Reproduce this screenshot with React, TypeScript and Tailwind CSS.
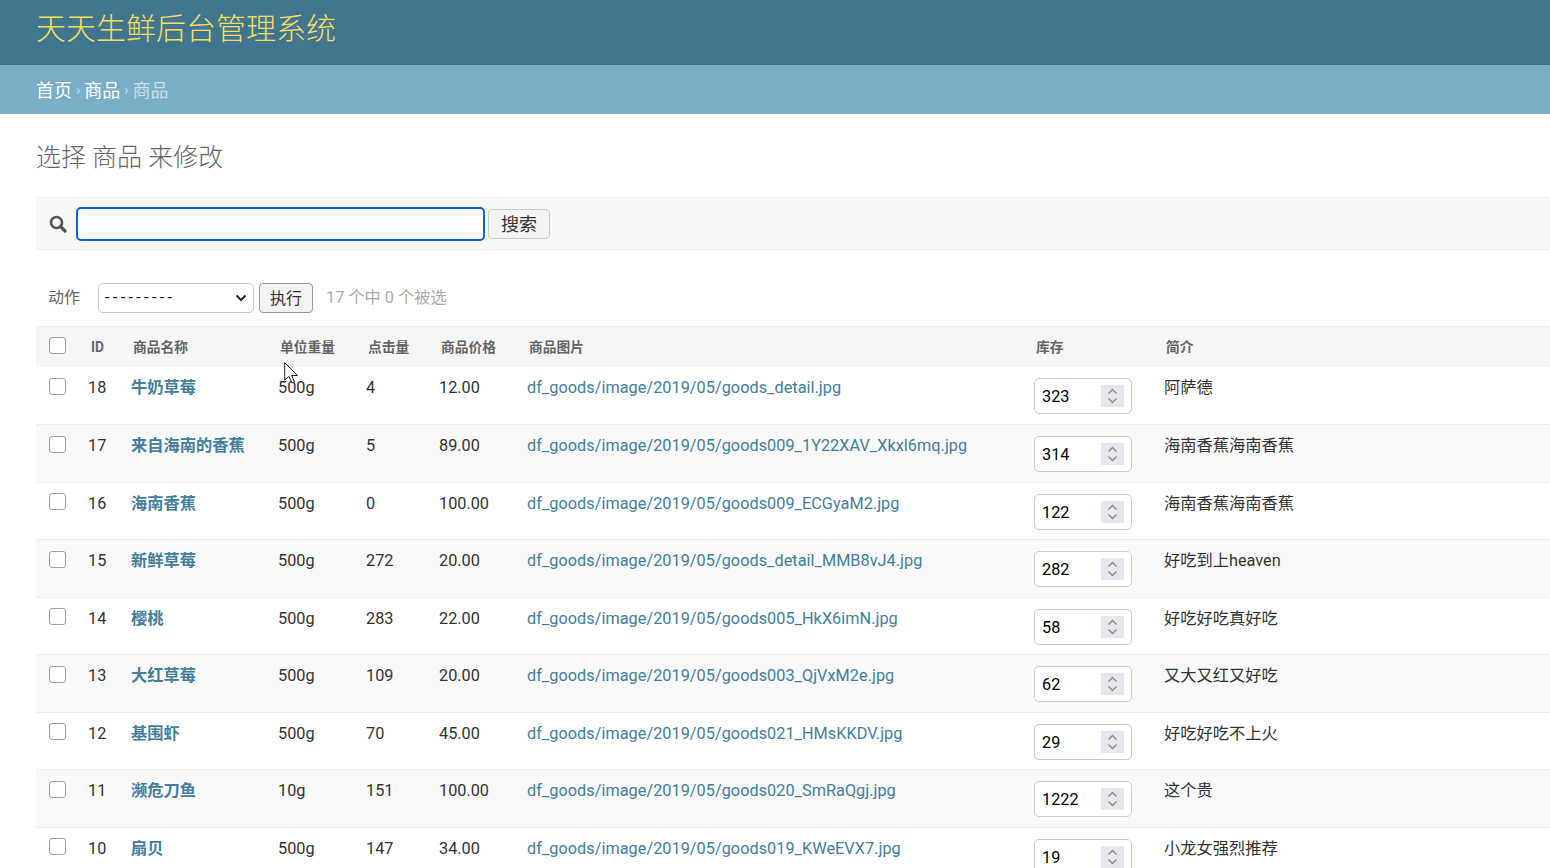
import React from 'react';

const goods = [
  { id: 18, name: '牛奶草莓', weight: '500g', clicks: 4, price: '12.00', image: 'df_goods/image/2019/05/goods_detail.jpg', stock: 323, desc: '阿萨德' },
  { id: 17, name: '来自海南的香蕉', weight: '500g', clicks: 5, price: '89.00', image: 'df_goods/image/2019/05/goods009_1Y22XAV_Xkxl6mq.jpg', stock: 314, desc: '海南香蕉海南香蕉' },
  { id: 16, name: '海南香蕉', weight: '500g', clicks: 0, price: '100.00', image: 'df_goods/image/2019/05/goods009_ECGyaM2.jpg', stock: 122, desc: '海南香蕉海南香蕉' },
  { id: 15, name: '新鲜草莓', weight: '500g', clicks: 272, price: '20.00', image: 'df_goods/image/2019/05/goods_detail_MMB8vJ4.jpg', stock: 282, desc: '好吃到上heaven' },
  { id: 14, name: '樱桃', weight: '500g', clicks: 283, price: '22.00', image: 'df_goods/image/2019/05/goods005_HkX6imN.jpg', stock: 58, desc: '好吃好吃真好吃' },
  { id: 13, name: '大红草莓', weight: '500g', clicks: 109, price: '20.00', image: 'df_goods/image/2019/05/goods003_QjVxM2e.jpg', stock: 62, desc: '又大又红又好吃' },
  { id: 12, name: '基围虾', weight: '500g', clicks: 70, price: '45.00', image: 'df_goods/image/2019/05/goods021_HMsKKDV.jpg', stock: 29, desc: '好吃好吃不上火' },
  { id: 11, name: '濒危刀鱼', weight: '10g', clicks: 151, price: '100.00', image: 'df_goods/image/2019/05/goods020_SmRaQgj.jpg', stock: 1222, desc: '这个贵' },
  { id: 10, name: '扇贝', weight: '500g', clicks: 147, price: '34.00', image: 'df_goods/image/2019/05/goods019_KWeEVX7.jpg', stock: 19, desc: '小龙女强烈推荐' },
];

const headers = ['商品名称', '单位重量', '点击量', '商品价格', '商品图片', '库存', '简介'];

const checkboxClass = 'block appearance-none w-[17px] h-[17px] bg-white border border-[#a0a0a8] rounded-[3px]';
const cellClass = 'align-top pt-[10px] px-[9px] leading-[22px] whitespace-nowrap';

function StockInput({ value }: { value: number }) {
  return (
    <div className="flex items-center w-[98px] h-[36px] bg-white border border-[#ccc] rounded-[5px] pl-[7px] pr-[7px]">
      <input
        type="text"
        defaultValue={value}
        className="w-[58px] min-w-0 flex-1 pt-[3px] text-[16.25px] text-black bg-transparent outline-none"
      />
      <span className="flex items-center justify-center w-[23px] h-[22px] bg-[#e6e6ec]">
        <svg width="11" height="18" viewBox="0 0 11 18" fill="none" stroke="#8a8a90" strokeWidth="1.3">
          <path d="M1.5 6.5 L5.5 2.5 L9.5 6.5" />
          <path d="M1.5 11.5 L5.5 15.5 L9.5 11.5" />
        </svg>
      </span>
    </div>
  );
}

export default function App() {
  return (
    <div
      className="relative h-screen overflow-hidden bg-white text-[16.25px] text-[#333]"
      style={{ fontFamily: 'Roboto, "Noto Sans CJK SC", sans-serif' }}
    >
      {/* Header */}
      <div className="h-[65px] bg-[#417690] pl-9 pt-[8px] text-[30px] leading-[42px] font-light text-[#f5dd5d]">
        天天生鲜后台管理系统
      </div>

      {/* Breadcrumbs */}
      <div className="flex items-center h-[49px] bg-[#79aec8] pl-9 pt-[2px] text-[18px] text-white">
        <span>首页</span>
        <span className="mx-[4px] text-[14px] text-white/60">›</span>
        <span>商品</span>
        <span className="mx-[4px] text-[14px] text-white/60">›</span>
        <span className="text-white/60">商品</span>
      </div>

      <div className="pl-9">
        <h1 className="pt-[27px] text-[25px] leading-[33px] font-light text-[#666]">选择 商品 来修改</h1>

        {/* Search */}
        <div className="flex items-center h-[53px] mt-[23px] bg-[#f8f8f8] border-y border-[#eee] pl-[13px]">
          <svg width="18" height="18" viewBox="0 0 18 18" fill="none" stroke="#555" className="mr-[9px] shrink-0">
            <circle cx="7.5" cy="7.5" r="5.5" strokeWidth="2.6" />
            <path d="M11.5 11.5 L16 16" strokeWidth="3.2" strokeLinecap="round" />
          </svg>
          <input
            type="text"
            className="w-[409px] h-[34px] bg-white border-2 border-[#0a63dc] rounded-[5px] outline-none"
          />
          <button className="ml-[3px] w-[62px] h-[30px] pt-[2px] bg-[#f3f3f3] border border-[#ccc] rounded-[4px] text-[18px] leading-[26px] text-[#333]">
            搜索
          </button>
        </div>

        {/* Actions */}
        <div className="flex items-center h-[30px] mt-[33px] pl-[12px] text-[#666]">
          <span className="w-[50px] text-[16px]">动作</span>
          <div className="flex items-center justify-between w-[156px] h-[30px] bg-white border border-[#ccc] rounded-[5px] pl-[6px] pr-[6px] text-[16px] text-black">
            <span className="tracking-[3.4px]">---------</span>
            <svg width="12" height="8" viewBox="0 0 12 8" fill="none" stroke="#222" strokeWidth="2">
              <path d="M1.5 1.5 L6 6 L10.5 1.5" />
            </svg>
          </div>
          <button className="ml-[5px] w-[54px] h-[30px] pt-[2px] bg-[#f3f3f3] border border-[#999] rounded-[4px] text-[16px] text-[#333]">
            执行
          </button>
          <span className="ml-[13px] text-[16.25px] text-[#aaa]">17 个中 0 个被选</span>
        </div>

        {/* Results */}
        <table className="table-fixed w-[1514px] mt-[13px] border-collapse">
          <colgroup>
            <col className="w-[43px]" />
            <col className="w-[43px]" />
            <col className="w-[147px]" />
            <col className="w-[88px]" />
            <col className="w-[73px]" />
            <col className="w-[88px]" />
            <col className="w-[507px]" />
            <col className="w-[130px]" />
            <col className="w-[395px]" />
          </colgroup>
          <thead>
            <tr className="h-[40.5px] bg-[#f6f6f6] border-t border-[#eee]">
              <th className="pl-[13px] pb-[4px] align-middle">
                <input type="checkbox" className={checkboxClass} />
              </th>
              <th className="pl-[12px] text-left text-[13.75px] font-bold text-[#666]">ID</th>
              {headers.map((h) => (
                <th key={h} className="pl-[11px] text-left text-[13.75px] font-bold text-[#666] whitespace-nowrap">
                  {h}
                </th>
              ))}
            </tr>
          </thead>
          <tbody>
            {goods.map((g, i) => (
              <tr key={g.id} className={`h-[57.5px] border-b border-[#eee] ${i % 2 === 1 ? 'bg-[#f9f9f9]' : 'bg-white'}`}>
                <td className="align-top pt-[10.5px] pl-[13px]">
                  <input type="checkbox" className={checkboxClass} />
                </td>
                <td className={cellClass}>{g.id}</td>
                <td className={`${cellClass} font-bold text-[#447e9b]`}>{g.name}</td>
                <td className={cellClass}>{g.weight}</td>
                <td className={cellClass}>{g.clicks}</td>
                <td className={cellClass}>{g.price}</td>
                <td className={`${cellClass} tracking-[0.04px] text-[#447e9b]`}>{g.image}</td>
                <td className="align-top pt-[11px] pl-[9px]">
                  <StockInput value={g.stock} />
                </td>
                <td className={cellClass}>{g.desc}</td>
              </tr>
            ))}
          </tbody>
        </table>
      </div>

      {/* Mouse pointer captured in the screenshot */}
      <svg width="18" height="26" viewBox="0 0 18 26" className="absolute left-[284px] top-[362px]">
        <path d="M0.7 0.7 L0.7 18 L5 14.5 L8 21 L10.5 20 L7.7 13.5 L13.5 13.5 Z" fill="#fff" stroke="#222" strokeWidth="1" />
      </svg>
    </div>
  );
}
